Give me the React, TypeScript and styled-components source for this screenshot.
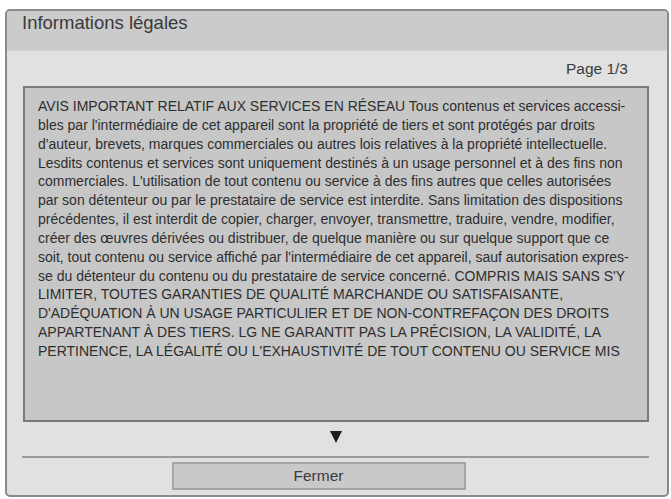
import React from "react";
import styled, { createGlobalStyle } from "styled-components";

const Global = createGlobalStyle`
  html, body { margin: 0; padding: 0; background: #ffffff; }
  body { font-family: "Liberation Sans", Arial, sans-serif; }
`;

const Page = styled.div`
  width: 671px;
  height: 499px;
  padding: 9px 2px 2px 5px;
  box-sizing: border-box;
`;

const Frame = styled.div`
  width: 664px;
  height: 488px;
  box-sizing: border-box;
  border: 2px solid #8a8a8a;
  border-radius: 5px;
  background: #e1e1e1;
  display: flex;
  flex-direction: column;
  overflow: hidden;
`;

const TitleBar = styled.div`
  height: 39px;
  background: #cbcbcb;
  border-bottom: 1px solid #d6d6d6;
  padding-left: 15px;
  display: flex;
  align-items: flex-start;
`;

const Title = styled.div`
  font-size: 18.5px;
  color: #3a3a3a;
  line-height: 22px;
  margin-top: 1px;
`;

const Body = styled.div`
  flex: 1;
  display: flex;
  flex-direction: column;
  padding: 0 18px 0 16px;
`;

const PageRow = styled.div`
  height: 35px;
  display: flex;
  justify-content: flex-end;
  align-items: center;
  font-size: 15.5px;
  color: #3a3a3a;
  padding-right: 21px;
`;

const TextBox = styled.div`
  height: 336px;
  box-sizing: border-box;
  border: 2px solid #7a7a7a;
  background: #c7c7c7;
  padding: 9px 8px 0 13px;
  overflow: hidden;
`;

const Line = styled.div`
  font-size: 14px;
  line-height: 18.85px;
  color: #2e2e2e;
  white-space: nowrap;
`;

const ArrowRow = styled.div`
  height: 34px;
  box-sizing: border-box;
  padding-top: 9px;
  display: flex;
  align-items: flex-start;
  justify-content: center;
`;

const Separator = styled.div`
  height: 2px;
  background: #9a9a9a;
  margin-left: -1px;
`;

const ButtonRow = styled.div`
  display: flex;
  justify-content: center;
  padding-top: 4px;
`;

const Button = styled.button`
  width: 294px;
  height: 28px;
  box-sizing: border-box;
  border: 2px solid #a5a5a5;
  background: #c9c9c9;
  font-family: "Liberation Sans", Arial, sans-serif;
  font-size: 15.5px;
  color: #3a3a3a;
  padding: 0;
  margin-left: -35px;
`;

const lines = [
  "AVIS IMPORTANT RELATIF AUX SERVICES EN RÉSEAU Tous contenus et services accessi-",
  "bles par l'intermédiaire de cet appareil sont la propriété de tiers et sont protégés par droits",
  "d'auteur, brevets, marques commerciales ou autres lois relatives à la propriété intellectuelle.",
  "Lesdits contenus et services sont uniquement destinés à un usage personnel et à des fins non",
  "commerciales. L'utilisation de tout contenu ou service à des fins autres que celles autorisées",
  "par son détenteur ou par le prestataire de service est interdite. Sans limitation des dispositions",
  "précédentes, il est interdit de copier, charger, envoyer, transmettre, traduire, vendre, modifier,",
  "créer des œuvres dérivées ou distribuer, de quelque manière ou sur quelque support que ce",
  "soit, tout contenu ou service affiché par l'intermédiaire de cet appareil, sauf autorisation expres-",
  "se du détenteur du contenu ou du prestataire de service concerné. COMPRIS MAIS SANS S'Y",
  "LIMITER, TOUTES GARANTIES DE QUALITÉ MARCHANDE OU SATISFAISANTE,",
  "D'ADÉQUATION À UN USAGE PARTICULIER ET DE NON-CONTREFAÇON DES DROITS",
  "APPARTENANT À DES TIERS. LG NE GARANTIT PAS LA PRÉCISION, LA VALIDITÉ, LA",
  "PERTINENCE, LA LÉGALITÉ OU L'EXHAUSTIVITÉ DE TOUT CONTENU OU SERVICE MIS",
];

export default function App() {
  return (
    <>
      <Global />
      <Page>
        <Frame>
          <TitleBar>
            <Title>Informations légales</Title>
          </TitleBar>
          <Body>
            <PageRow>Page 1/3</PageRow>
            <TextBox>
              {lines.map((l, i) => (
                <Line key={i}>{l}</Line>
              ))}
            </TextBox>
            <ArrowRow>
              <svg width="12" height="12" viewBox="0 0 12 12">
                <path d="M0 0 H12 L6 12 Z" fill="#1e1e1e" />
              </svg>
            </ArrowRow>
            <Separator />
            <ButtonRow>
              <Button>Fermer</Button>
            </ButtonRow>
          </Body>
        </Frame>
      </Page>
    </>
  );
}
